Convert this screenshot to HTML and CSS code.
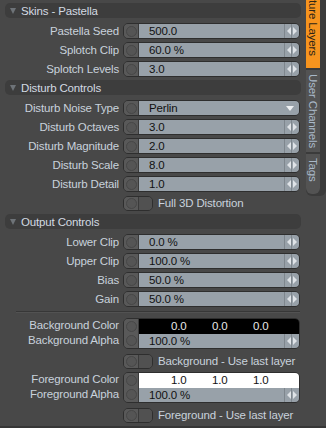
FILE: index.html
```html
<!DOCTYPE html>
<html>
<head>
  <meta charset="utf-8">
  <title>Skins - Pastella</title>
  <link rel="stylesheet" href="styles.css">
</head>

<body>
  <div class="panel">
    <div class="props">

      <div class="section-head"><span class="arrow"></span>Skins - Pastella</div>
      <div class="row">
        <label>Pastella Seed</label>
        <div class="field"><span class="cap"><i></i></span><span class="value">500.0</span><span class="spin"></span></div>
      </div>
      <div class="row">
        <label>Splotch Clip</label>
        <div class="field"><span class="cap"><i></i></span><span class="value">60.0 %</span><span class="spin"></span></div>
      </div>
      <div class="row">
        <label>Splotch Levels</label>
        <div class="field"><span class="cap"><i></i></span><span class="value">3.0</span><span class="spin"></span></div>
      </div>

      <div class="section-head"><span class="arrow"></span>Disturb Controls</div>
      <div class="row">
        <label>Disturb Noise Type</label>
        <div class="field"><span class="cap"><i></i></span><span class="value">Perlin</span><span class="drop"></span></div>
      </div>
      <div class="row">
        <label>Disturb Octaves</label>
        <div class="field"><span class="cap"><i></i></span><span class="value">3.0</span><span class="spin"></span></div>
      </div>
      <div class="row">
        <label>Disturb Magnitude</label>
        <div class="field"><span class="cap"><i></i></span><span class="value">2.0</span><span class="spin"></span></div>
      </div>
      <div class="row">
        <label>Disturb Scale</label>
        <div class="field"><span class="cap"><i></i></span><span class="value">8.0</span><span class="spin"></span></div>
      </div>
      <div class="row">
        <label>Disturb Detail</label>
        <div class="field"><span class="cap"><i></i></span><span class="value">1.0</span><span class="spin"></span></div>
      </div>
      <div class="row">
        <label></label>
        <div class="check"><span class="toggle"><span class="cap"><i></i></span><span class="box"></span></span>Full 3D Distortion</div>
      </div>

      <div class="section-head"><span class="arrow"></span>Output Controls</div>
      <div class="row">
        <label>Lower Clip</label>
        <div class="field"><span class="cap"><i></i></span><span class="value">0.0 %</span><span class="spin"></span></div>
      </div>
      <div class="row">
        <label>Upper Clip</label>
        <div class="field"><span class="cap"><i></i></span><span class="value">100.0 %</span><span class="spin"></span></div>
      </div>
      <div class="row">
        <label>Bias</label>
        <div class="field"><span class="cap"><i></i></span><span class="value">50.0 %</span><span class="spin"></span></div>
      </div>
      <div class="row">
        <label>Gain</label>
        <div class="field"><span class="cap"><i></i></span><span class="value">50.0 %</span><span class="spin"></span></div>
      </div>

      <div class="separator"></div>

      <div class="color-group">
        <div class="color-labels">
          <label>Background Color</label>
          <label>Background Alpha</label>
        </div>
        <div class="color-field">
          <span class="cap tall"><i></i><i></i></span>
          <div class="color-body">
            <div class="swatch dark"><span>0.0</span><span>0.0</span><span>0.0</span></div>
            <div class="alpha"><span class="value">100.0 %</span><span class="spin"></span></div>
          </div>
        </div>
      </div>
      <div class="row">
        <label></label>
        <div class="check"><span class="toggle"><span class="cap"><i></i></span><span class="box"></span></span>Background - Use last layer</div>
      </div>

      <div class="color-group">
        <div class="color-labels">
          <label>Foreground Color</label>
          <label>Foreground Alpha</label>
        </div>
        <div class="color-field">
          <span class="cap tall"><i></i><i></i></span>
          <div class="color-body">
            <div class="swatch light"><span>1.0</span><span>1.0</span><span>1.0</span></div>
            <div class="alpha"><span class="value">100.0 %</span><span class="spin"></span></div>
          </div>
        </div>
      </div>
      <div class="row">
        <label></label>
        <div class="check"><span class="toggle"><span class="cap"><i></i></span><span class="box"></span></span>Foreground - Use last layer</div>
      </div>

    </div>

    <div class="tabs">
      <div class="tab active"><span>ture Layers</span></div>
      <div class="tab"><span>User Channels</span></div>
      <div class="tab last"><span>Tags</span></div>
    </div>
  </div>
</body>
</html>
```

FILE: styles.css
```css
body {
  margin: 0;
  background-color: #484848;
  font-family: "Liberation Sans", Arial, sans-serif;
  font-size: 11px;
  letter-spacing: -0.15px;
  color: #c9d2dc;
}

.panel {
  display: flex;
  height: 428px;
  box-sizing: border-box;
  border-bottom: 2px solid #363636;
  overflow: hidden;
}

.props {
  width: 306px;
  padding-top: 3px;
}

/* section headers */
.section-head {
  display: flex;
  align-items: center;
  height: 15px;
  margin: 0 5px 5px 5px;
  padding-left: 5px;
  background-color: #3d3d3d;
  border-radius: 5px;
  color: #d3dae2;
  font-size: 11.5px;
}

.row + .section-head {
  margin-top: 1px;
}

.arrow {
  width: 0;
  height: 0;
  margin-right: 5px;
  border-left: 3.5px solid transparent;
  border-right: 3.5px solid transparent;
  border-top: 6px solid #6e7378;
}

/* property rows */
.row {
  display: flex;
  align-items: center;
  height: 16px;
  margin-bottom: 3px;
}

label {
  display: block;
  width: 119px;
  padding-right: 4px;
  text-align: right;
  white-space: nowrap;
  font-size: 11.5px;
}

.field {
  display: flex;
  width: 177px;
  height: 16px;
  box-sizing: border-box;
  border: 1px solid #2e2e2e;
  border-radius: 5px;
  overflow: hidden;
}

.cap {
  display: flex;
  flex-direction: column;
  justify-content: space-around;
  align-items: center;
  width: 14px;
  background-color: #595959;
  border-right: 1px solid #3a3a3a;
}

.cap i {
  display: block;
  width: 9px;
  height: 9px;
  border: 1px solid #474747;
  border-radius: 50%;
  background-color: #555;
}

.value {
  flex: 1;
  padding-left: 10px;
  background-color: #98a1a9;
  color: #111;
  font-size: 11.5px;
  line-height: 14px;
}

.spin {
  position: relative;
  width: 14px;
  background-color: #98a1a9;
  border-left: 1px solid #7e868d;
  background-image: linear-gradient(to right, transparent 6px, #7e868d 6px, #7e868d 7px, transparent 7px);
}

.spin::before,
.spin::after {
  content: "";
  position: absolute;
  top: 3px;
  border-top: 4px solid transparent;
  border-bottom: 4px solid transparent;
}

.spin::before {
  left: 2px;
  border-right: 4px solid #dfe3e7;
}

.spin::after {
  left: 8px;
  border-left: 4px solid #dfe3e7;
}

.drop {
  position: relative;
  width: 16px;
  background-color: #98a1a9;
}

.drop::after {
  content: "";
  position: absolute;
  top: 5px;
  left: 3px;
  border-left: 4px solid transparent;
  border-right: 4px solid transparent;
  border-top: 5px solid #eef0f2;
}

/* toggles */
.check {
  display: flex;
  align-items: center;
  font-size: 11.5px;
}

.toggle {
  display: flex;
  width: 30px;
  height: 15px;
  margin-right: 5px;
  box-sizing: border-box;
  border: 1px solid #2e2e2e;
  border-radius: 5px;
  overflow: hidden;
}

.toggle .cap {
  width: 14px;
}

.toggle .box {
  flex: 1;
  background-color: #515151;
}

/* separator */
.separator {
  height: 1px;
  margin: 4px 6px 5px 16px;
  background-color: #373737;
  border-bottom: 1px solid #525252;
}

/* color pickers */
.color-group {
  display: flex;
  margin-bottom: 4px;
}

.color-labels label {
  height: 15px;
  line-height: 15px;
}

.color-field {
  display: flex;
  width: 177px;
  height: 31px;
  box-sizing: border-box;
  border: 1px solid #2e2e2e;
  border-radius: 5px;
  overflow: hidden;
}

.cap.tall {
  width: 14px;
}

.color-body {
  display: flex;
  flex-direction: column;
  flex: 1;
}

.swatch {
  display: flex;
  height: 15px;
  padding-left: 32px;
  font-size: 11.5px;
  line-height: 15px;
}

.swatch span {
  width: 41px;
}

.swatch.dark {
  background-color: #000;
  color: #e8e8e8;
}

.swatch.light {
  background-color: #fff;
  color: #111;
}

.alpha {
  display: flex;
  flex: 1;
}

/* side tabs */
.tabs {
  width: 20px;
  height: 196px;
  background-color: #3b3b3b;
  border-bottom-left-radius: 6px;
  border-bottom-right-radius: 6px;
  overflow: hidden;
}

.tab {
  display: flex;
  flex-direction: column;
  width: 14px;
  margin-bottom: 2px;
  background-color: #535353;
  color: #a9b8c8;
  overflow: hidden;
}

.tab span {
  writing-mode: vertical-rl;
  white-space: nowrap;
  padding: 4px 0 6px 0;
  font-size: 11.5px;
  line-height: 14px;
}

.tab.active {
  height: 68px;
  background-color: #f7941e;
  color: #2c2417;
}

.tab.active span {
  padding-top: 0;
}

.tab:nth-child(2) {
  height: 82px;
}

.tab.last {
  height: 40px;
  border-bottom-left-radius: 6px;
  border-bottom-right-radius: 6px;
}
```
